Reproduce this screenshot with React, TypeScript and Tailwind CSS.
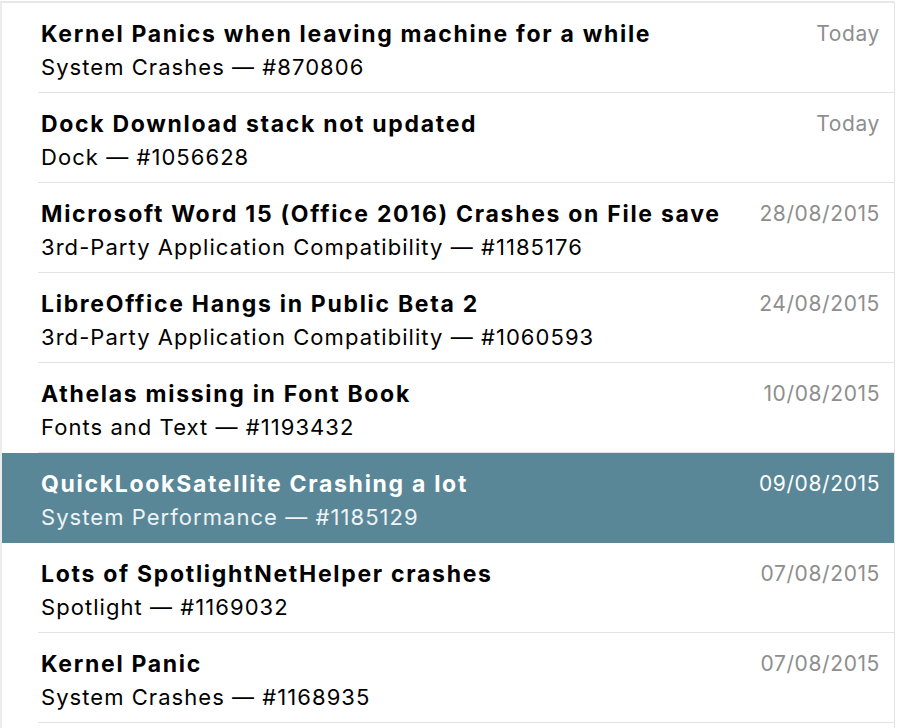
import React from "react";

type Item = { title: string; sub: string; date: string; selected?: boolean };

const items: Item[] = [
  { title: "Kernel Panics when leaving machine for a while", sub: "System Crashes — #870806", date: "Today" },
  { title: "Dock Download stack not updated", sub: "Dock — #1056628", date: "Today" },
  { title: "Microsoft Word 15 (Office 2016) Crashes on File save", sub: "3rd-Party Application Compatibility — #1185176", date: "28/08/2015" },
  { title: "LibreOffice Hangs in Public Beta 2", sub: "3rd-Party Application Compatibility — #1060593", date: "24/08/2015" },
  { title: "Athelas missing in Font Book", sub: "Fonts and Text — #1193432", date: "10/08/2015" },
  { title: "QuickLookSatellite Crashing a lot", sub: "System Performance — #1185129", date: "09/08/2015", selected: true },
  { title: "Lots of SpotlightNetHelper crashes", sub: "Spotlight — #1169032", date: "07/08/2015" },
  { title: "Kernel Panic", sub: "System Crashes — #1168935", date: "07/08/2015" },
];

function Row({ item }: { item: Item }) {
  const sel = !!item.selected;
  return (
    <div className={`h-[90px] flex flex-col ${sel ? "bg-[#5a8797]" : ""}`}>
      <div className="flex-1 flex pl-[39px] pr-[14px] pt-[14px]">
        <div className="flex-1 min-w-0">
          <div className={`text-[23px] leading-[34px] font-bold tracking-[1.7px] whitespace-nowrap ${sel ? "text-white" : "text-black"}`}>
            {item.title}
          </div>
          <div className={`text-[22px] leading-[33px] tracking-[1.05px] whitespace-nowrap ${sel ? "text-white/90" : "text-black"}`}>
            {item.sub}
          </div>
        </div>
        <div className={`text-[21px] leading-[34px] tracking-[0.6px] whitespace-nowrap ${sel ? "text-white" : "text-[#8e8e8e]"}`}>
          {item.date}
        </div>
      </div>
      <div className={`h-px ml-[36px] ${sel ? "bg-transparent" : "bg-[#e3e3e3]"}`} />
    </div>
  );
}

export default function App() {
  return (
    <div
      className="w-[898px] h-[728px] bg-white overflow-hidden pt-px pr-[3px]"
      style={{ fontFamily: "Inter, 'Noto Sans', sans-serif" }}
    >
      <div className="border-t-2 border-l-2 border-r border-t-[#e8e8e8] border-l-[#ececec] border-r-[#e3e3e3] h-full">
        {items.map((it, i) => (
          <Row key={i} item={it} />
        ))}
      </div>
    </div>
  );
}
